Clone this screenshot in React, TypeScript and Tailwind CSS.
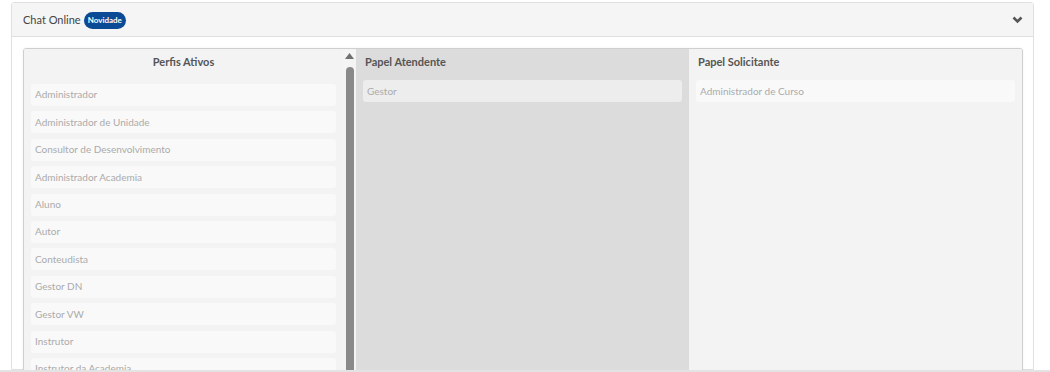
const perfis = [
  "Administrador",
  "Administrador de Unidade",
  "Consultor de Desenvolvimento",
  "Administrador Academia",
  "Aluno",
  "Autor",
  "Conteudista",
  "Gestor DN",
  "Gestor VW",
  "Instrutor",
  "Instrutor da Academia",
  "Tutor",
];

function Item({ label, className }: { label: string; className: string }) {
  return (
    <div
      className={`h-[22px] shrink-0 rounded-[3px] pl-[4px] flex items-center text-[10px] text-[#ababab] ${className}`}
    >
      {label}
    </div>
  );
}

export default function App() {
  return (
    <div
      className="w-full h-[372px] overflow-hidden bg-white flex flex-col"
      style={{ fontFamily: "Lato, 'Noto Sans', sans-serif" }}
    >
      <div className="flex-1 min-h-0 pt-[2px] pl-[11px] pr-[16px]">
        <div className="h-full border border-[#e0e0e0] rounded-t-[3px] flex flex-col">
          <div className="h-[34px] shrink-0 bg-[#f5f5f5] border-b border-[#e0e0e0] flex items-center justify-between pl-[11px] pr-[10px] pt-[1px]">
            <div className="flex items-center gap-[3px]">
              <span className="text-[11px] text-[#444]">Chat Online</span>
              <span className="h-[17px] px-[4px] rounded-full bg-[#0b4a95] text-white text-[8px] font-bold flex items-center">
                Novidade
              </span>
            </div>
            <svg width="11" height="8" viewBox="0 0 11 8">
              <polyline
                points="1.5,1.5 5.5,5.5 9.5,1.5"
                fill="none"
                stroke="#555"
                strokeWidth="2.6"
              />
            </svg>
          </div>
          <div className="flex-1 min-h-0 pt-[11px] pl-[11px] pr-[10px]">
            <div className="h-[330px] border border-[#cfcfcf] rounded-[3px] shadow-[0_0_2px_rgba(0,0,0,0.08)] flex overflow-hidden">
              <div className="w-[319px] shrink-0 bg-[#f3f3f3] px-[7px] pt-[6px] flex flex-col gap-[5.4px] overflow-hidden">
                <div className="h-[14px] shrink-0 flex items-center justify-center text-[11px] font-bold text-[#555] mb-[9.6px]">
                  Perfis Ativos
                </div>
                {perfis.map((p) => (
                  <Item key={p} label={p} className="bg-[#f9f9f9]" />
                ))}
              </div>
              <div className="w-[13px] shrink-0 bg-[#f4f4f4] flex flex-col items-center pt-[4px]">
                <svg width="9" height="6" viewBox="0 0 9 6">
                  <polygon points="4.5,0 9,6 0,6" fill="#707070" />
                </svg>
                <div className="w-[8px] flex-1 mt-[8px] rounded-full bg-[#898989]" />
              </div>
              <div className="flex-1 bg-[#dcdcdc] px-[7px] pt-[5px] flex flex-col gap-[9px]">
                <div className="h-[17px] pl-[2px] flex items-center text-[11px] font-bold text-[#555]">
                  Papel Atendente
                </div>
                <Item label="Gestor" className="bg-[#ededed]" />
              </div>
              <div className="flex-1 bg-[#f3f3f3] px-[7px] pt-[5px] flex flex-col gap-[9px]">
                <div className="h-[17px] pl-[2px] flex items-center text-[11px] font-bold text-[#555]">
                  Papel Solicitante
                </div>
                <Item label="Administrador de Curso" className="bg-[#f9f9f9]" />
              </div>
            </div>
          </div>
        </div>
      </div>
      <div className="h-[2px] shrink-0 bg-[#e3e3e3]" />
    </div>
  );
}
